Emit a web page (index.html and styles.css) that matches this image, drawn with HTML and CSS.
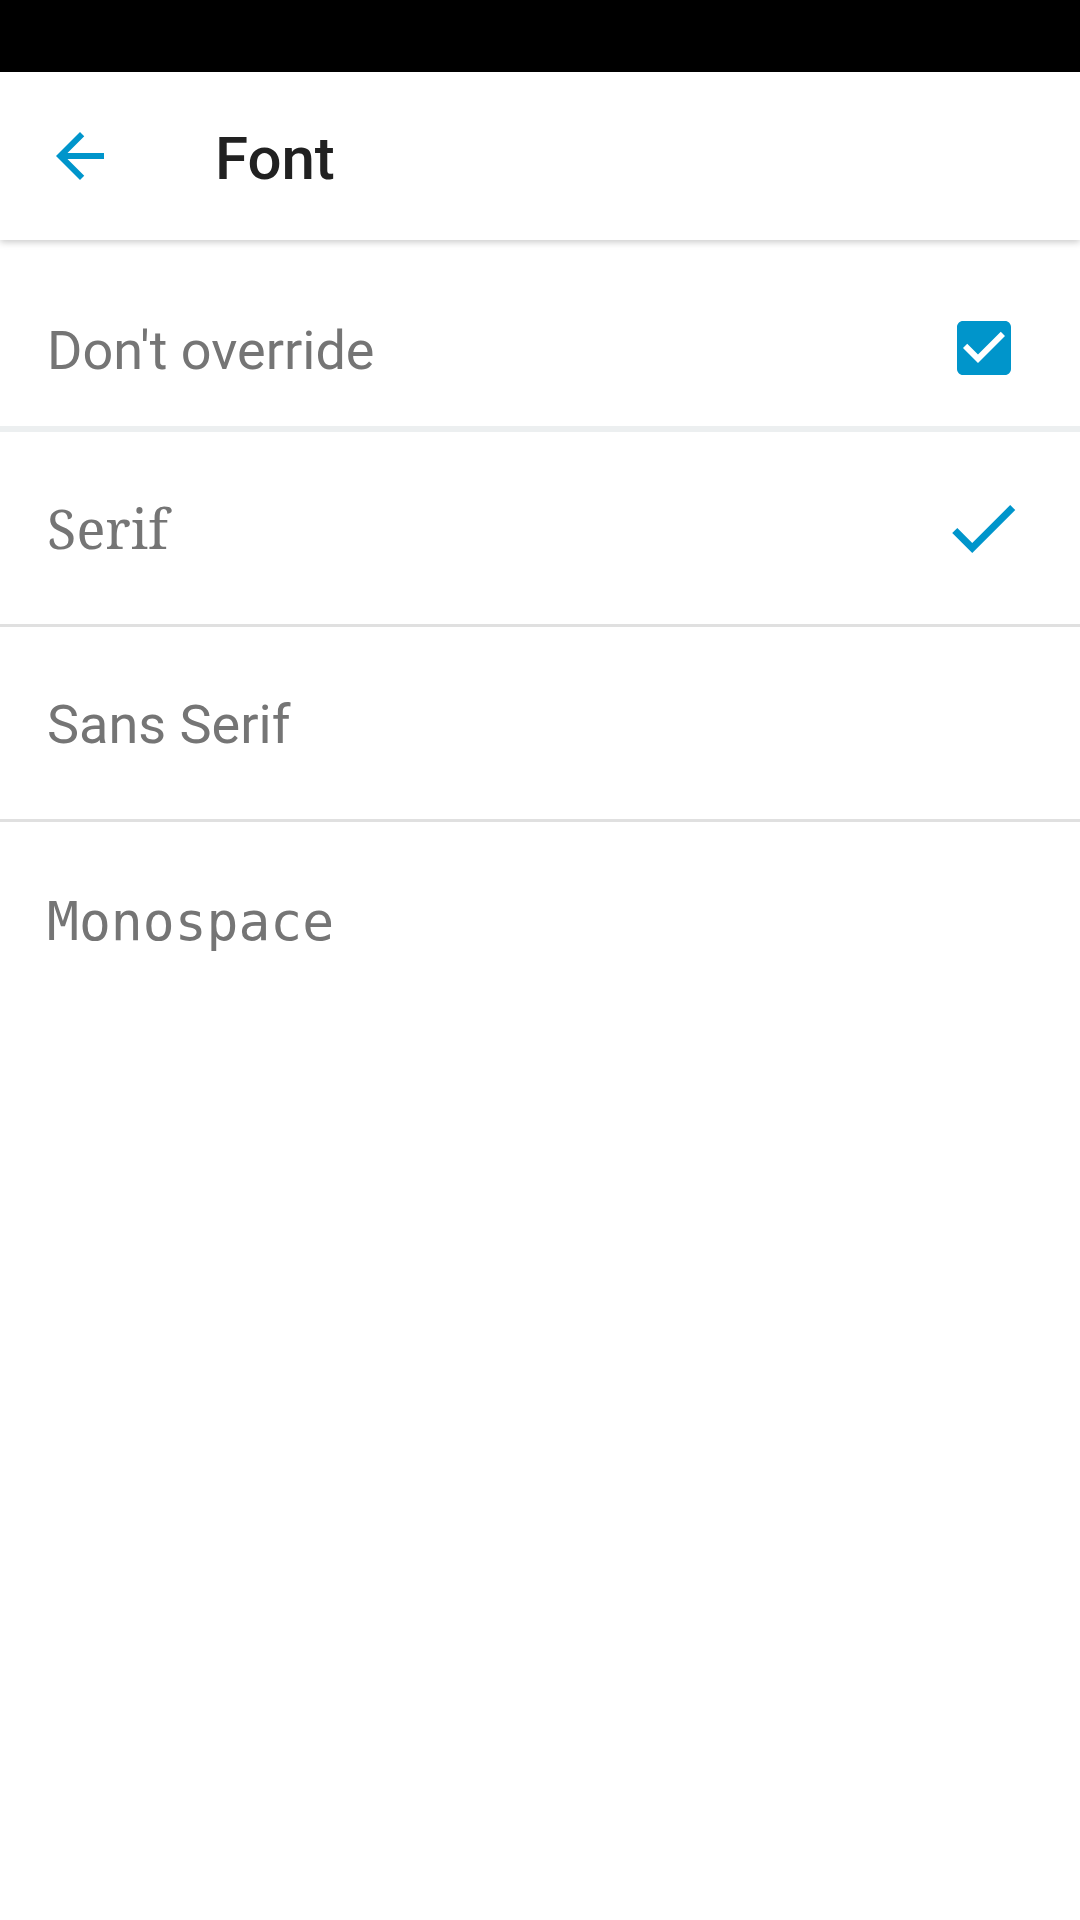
FILE: index.html
```html
<!DOCTYPE html>
<html>
<head>
<meta charset="utf-8">
<link rel="stylesheet" href="styles.css">
</head>
<body>
<div class="statusbar"></div>
<header class="appbar">
  <svg class="back" viewBox="0 0 24 24" width="72" height="72"><path d="M20 11H7.83l5.59-5.59L12 4l-8 8 8 8 1.41-1.41L7.83 13H20v-2z"/></svg>
  <h1 class="title">Font</h1>
</header>
<main class="list">
  <div class="item item-first">
    <span class="label sans">Don't override</span>
    <svg class="checkbox" viewBox="0 0 24 24" width="72" height="72"><path d="M19 3H5c-1.11 0-2 .9-2 2v14c0 1.1.89 2 2 2h14c1.11 0 2-.9 2-2V5c0-1.1-.89-2-2-2zm-9 14l-5-5 1.41-1.41L10 14.170l7.59-7.59L19 8l-9 9z"/></svg>
  </div>
  <div class="item">
    <span class="label serif">Serif</span>
    <svg class="check" viewBox="0 0 24 24" width="86" height="86"><path d="M9 16.17L4.83 12l-1.42 1.41L9 19 21 7l-1.41-1.41z"/></svg>
  </div>
  <div class="item">
    <span class="label sans">Sans Serif</span>
  </div>
  <div class="item item-last">
    <span class="label mono">Monospace</span>
  </div>
</main>
</body>
</html>
```

FILE: styles.css
```css
* { box-sizing: border-box; }
html, body {
  margin: 0;
  padding: 0;
  background: #ffffff;
}
body {
  width: 1080px;
  height: 1920px;
  overflow: hidden;
  font-family: Roboto, "Noto Sans", sans-serif;
}
.statusbar {
  height: 72px;
  background: #000000;
}
.appbar {
  position: relative;
  z-index: 2;
  height: 168px;
  display: flex;
  align-items: center;
  padding-left: 44px;
  background: #ffffff;
  box-shadow: 0 2px 7px rgba(0, 0, 0, 0.22);
}
.back {
  fill: #0095cb;
  flex: none;
}
.title {
  margin: 5px 0 0 99px;
  font-family: Roboto, sans-serif;
  font-weight: 500;
  font-size: 60px;
  color: #212121;
  line-height: 1;
}
.list {
  display: flex;
  flex-direction: column;
}
.item {
  height: 195px;
  display: flex;
  align-items: center;
  justify-content: space-between;
  padding-left: 47px;
  border-bottom: 3px solid #e0e0e0;
}
.label {
  color: #757575;
  font-size: 54px;
  line-height: 1.2;
  padding-top: 5px;
}
.item-first {
  height: 192px;
  padding-top: 30px;
  padding-right: 60px;
  border-bottom: 6px solid #eceff0;
}
.item-first .label {
  padding-top: 7px;
}
.item-last {
  border-bottom: none;
}
.sans {
  font-family: Roboto, sans-serif;
}
.serif {
  font-family: "Noto Serif", "DejaVu Serif", serif;
  padding-top: 0;
}
.mono {
  font-family: "Droid Sans Mono", "DejaVu Sans Mono", monospace;
  font-size: 53px;
}
.checkbox {
  fill: #0095cb;
  flex: none;
}
.check {
  fill: #0095cb;
  flex: none;
  margin-right: 54px;
}
```
